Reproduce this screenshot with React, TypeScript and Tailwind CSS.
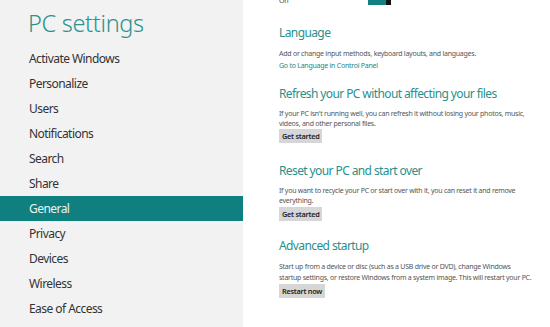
const items = [
    "Activate Windows",
    "Personalize",
    "Users",
    "Notifications",
    "Search",
    "Share",
    "General",
    "Privacy",
    "Devices",
    "Wireless",
    "Ease of Access",
]

function Heading({children}: { children: React.ReactNode }) {
    return <h2 className="text-[12px] tracking-[-0.6px] leading-[18px] text-[#2a8f8c] mb-[6px]">{children}</h2>
}

function GrayButton({label}: { label: string }) {
    return (
        <button className="block bg-[#d6d6d6] text-[#222] text-[7.3px] tracking-[-0.25px] font-semibold h-[14px] px-[3px] leading-[14px]">
            {label}
        </button>
    )
}

export default function App() {
    return (
        <div className="flex w-[550px] h-[327px] overflow-hidden bg-white font-['Noto_Sans',sans-serif]">
            <aside className="w-[243px] h-full bg-[#f2f2f2] shrink-0">
                <h1 className="pl-[28px] pt-[7px] text-[23.5px] tracking-[-0.3px] leading-[32px] text-[#2a9290] font-light">PC settings</h1>
                <ul className="mt-[7px]">
                    {items.map(item => (
                        <li key={item}
                            className={item === "General"
                                ? "h-[25px] pl-[29px] flex items-center text-[12px] tracking-[-0.55px] bg-[#0f7f7f] text-[#e8f4f4]"
                                : "h-[25px] pl-[29px] flex items-center text-[12px] tracking-[-0.55px] text-[#333]"}>
                            {item}
                        </li>
                    ))}
                </ul>
            </aside>
            <main className="flex-1 pl-[36px] text-[7px] tracking-[-0.25px] text-[#555] leading-[10px]">
                <div className="flex items-start h-[28px] -mt-[4px]">
                    <span className="text-[#444]">On</span>
                    <div className="ml-[80px] mt-[4px] w-[23px] h-[5px] flex">
                        <div className="flex-1 bg-[#128080]"/>
                        <div className="w-[5px] bg-[#111]"/>
                    </div>
                </div>

                <section>
                    <h2 className="text-[12px] tracking-[-0.6px] leading-[18px] text-[#2a8f8c] mb-[7px]">Language</h2>
                    <p>Add or change input methods, keyboard layouts, and languages.</p>
                    <p className="mt-[2px] text-[#1d8784]">Go to Language in Control Panel</p>
                </section>

                <section className="mt-[14px]">
                    <Heading>Refresh your PC without affecting your files</Heading>
                    <p>If your PC isn't running well, you can refresh it without losing your photos, music,<br/>videos, and other personal files.</p>
                    <GrayButton label="Get started"/>
                </section>

                <section className="mt-[19px]">
                    <Heading>Reset your PC and start over</Heading>
                    <p className="mb-[1px]">If you want to recycle your PC or start over with it, you can reset it and remove<br/>everything.</p>
                    <GrayButton label="Get started"/>
                </section>

                <section className="mt-[16px]">
                    <Heading>Advanced startup</Heading>
                    <p className="leading-[11px] mb-[1px]">Start up from a device or disc (such as a USB drive or DVD), change Windows<br/>startup settings, or restore Windows from a system image. This will restart your PC.</p>
                    <GrayButton label="Restart now"/>
                </section>
            </main>
        </div>
    )
}
